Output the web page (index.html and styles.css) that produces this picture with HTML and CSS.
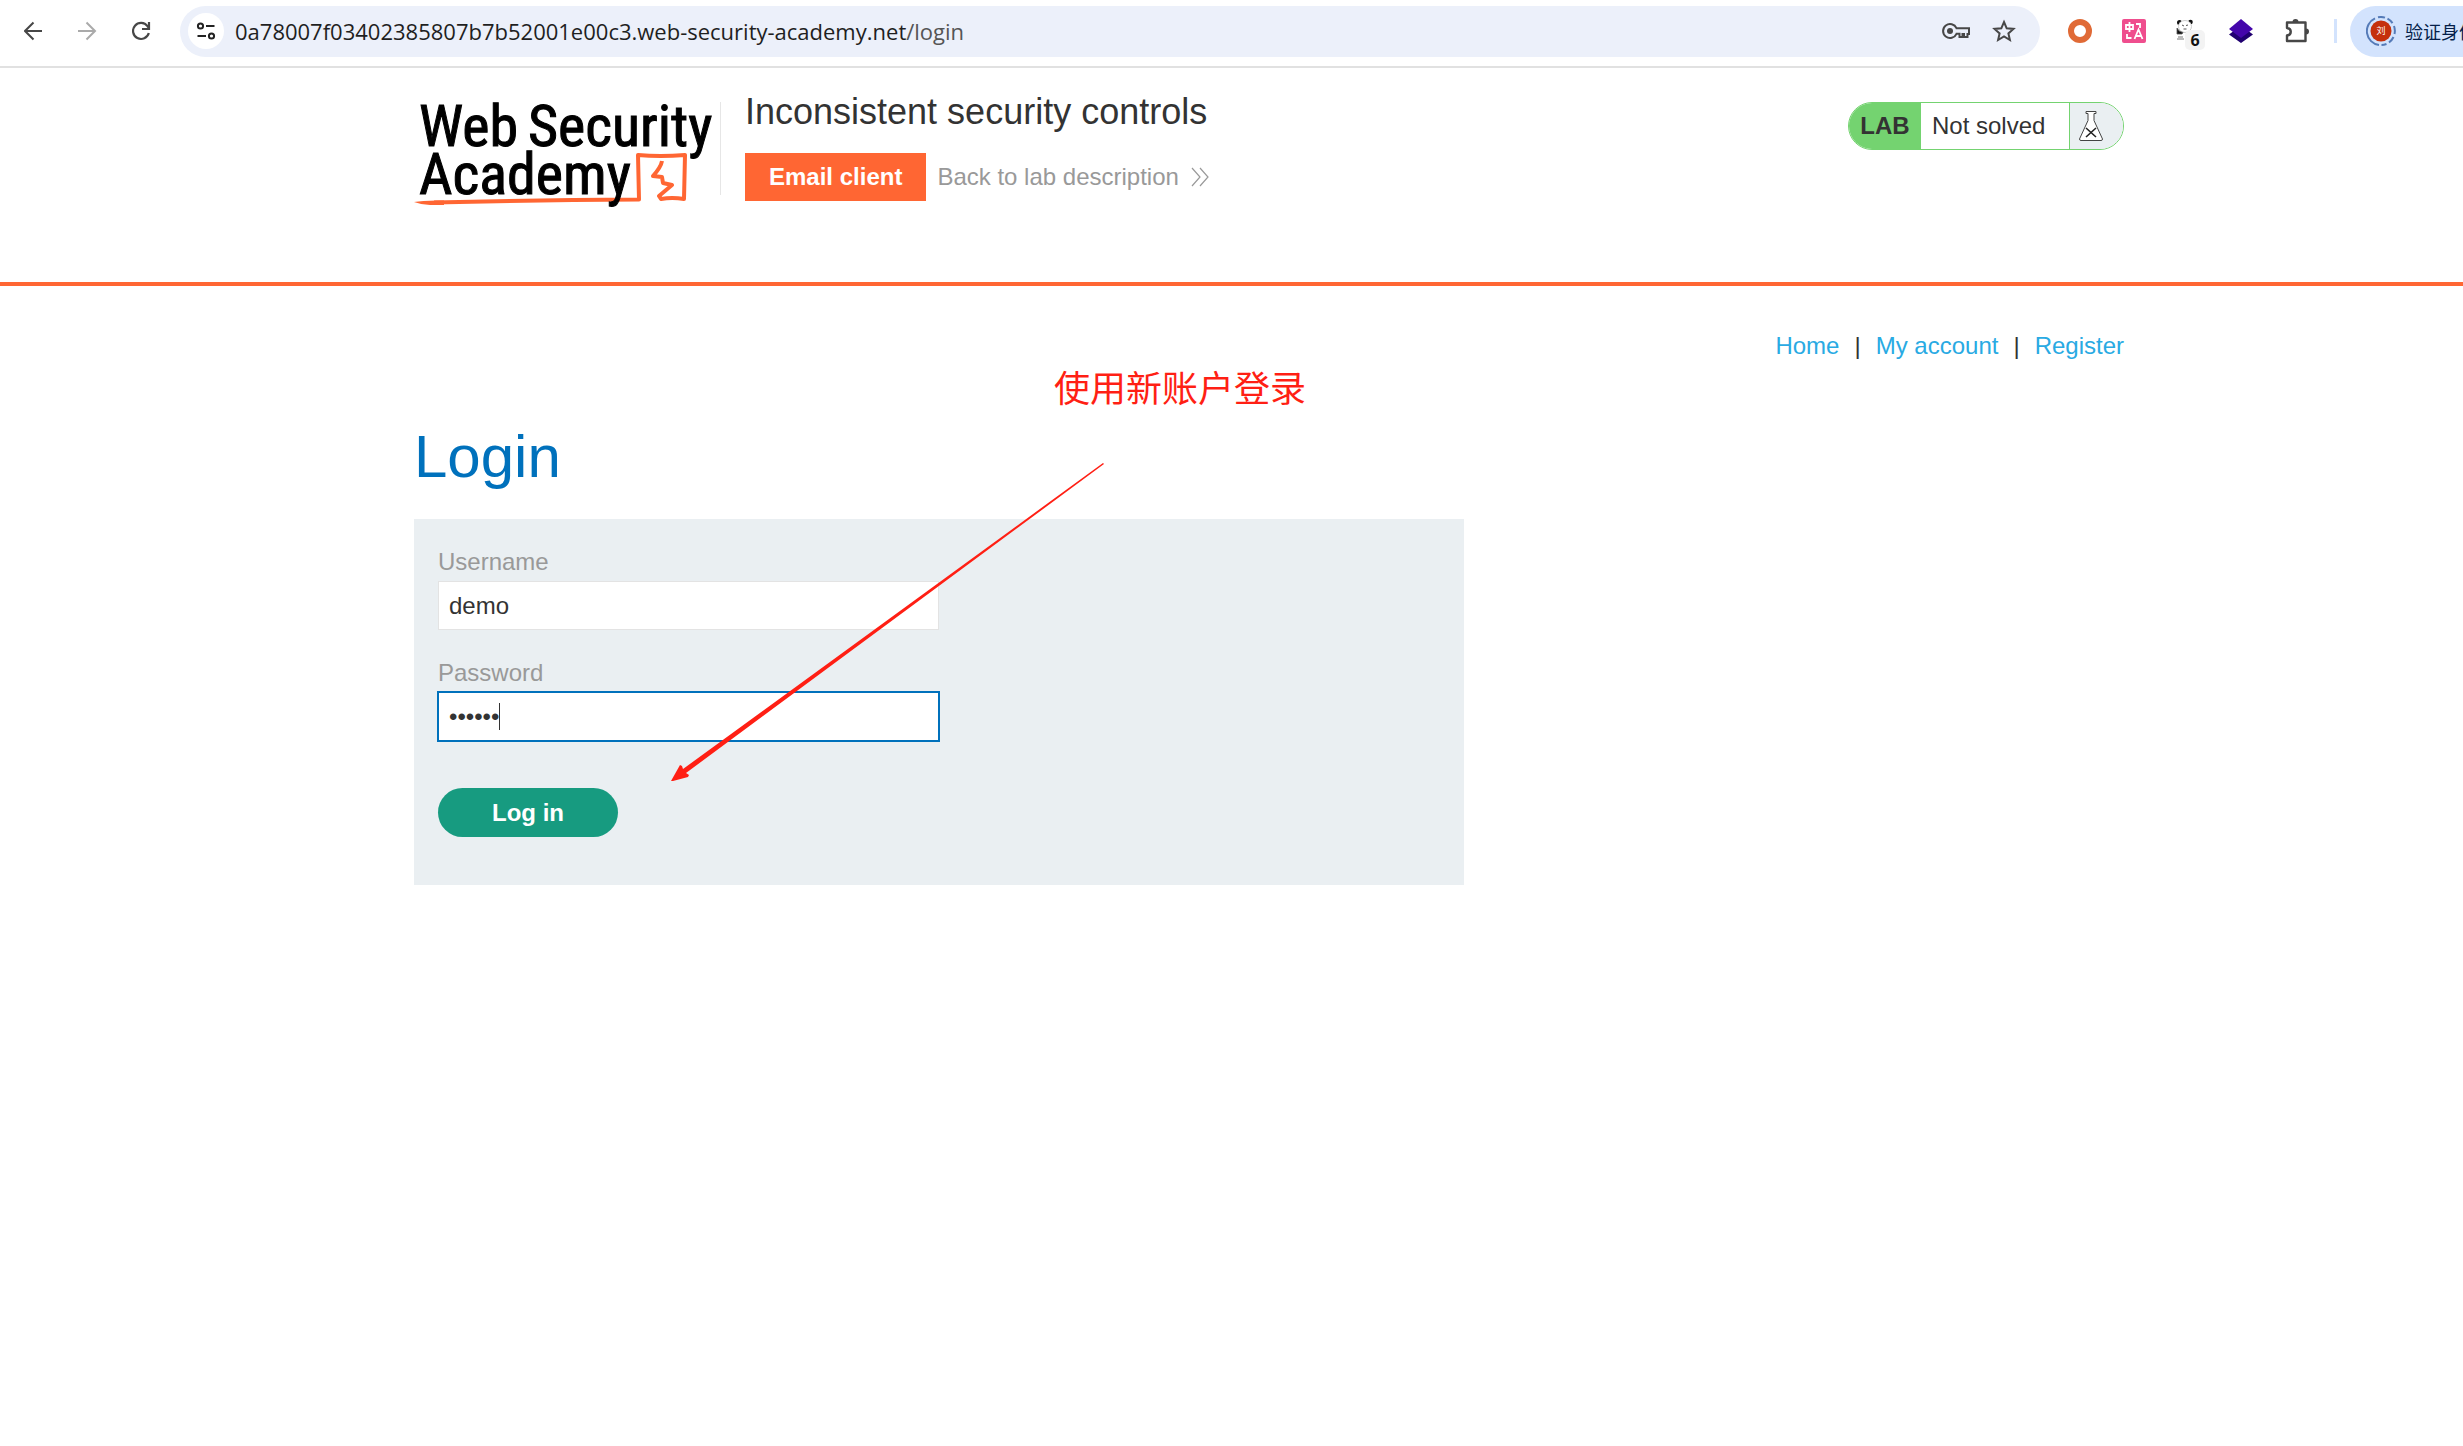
FILE: index.html
```html
<!DOCTYPE html>
<html lang="en">
<head>
<meta charset="utf-8">
<title>Inconsistent security controls</title>
<link rel="stylesheet" href="styles.css">
</head>
<body>
<div class="browser-bar">
  <button class="tool" type="button" aria-label="Back"><svg width="20" height="20" viewBox="0 0 20 20" fill="none" stroke="#474747" stroke-width="2"><path d="M18 10H2M9.500 1.500L1 10l8.500 8.500"/></svg></button>
  <button class="tool" type="button" aria-label="Forward"><svg width="20" height="20" viewBox="0 0 20 20" fill="none" stroke="#aaa" stroke-width="2"><path d="M0 10h16M8.500 1.500L17 10l-8.500 8.500"/></svg></button>
  <button class="tool" type="button" aria-label="Reload"><svg width="20" height="20" viewBox="0 0 20 20" fill="none" stroke="#474747" stroke-width="2.200"><path d="M16.800 12A8 8 0 1 1 15.500 5.200L17 7"/><path d="M17 1v7h-7"/></svg></button>
  <div class="address">
    <button class="site-info" type="button" aria-label="Site information"><svg width="20" height="18" viewBox="0 0 20 18" fill="none" stroke="#222" stroke-width="2"><circle cx="4.500" cy="4" r="2.600"/><path d="M10 4h8.500M1.500 14H10"/><circle cx="15.500" cy="14" r="2.600"/></svg></button>
    <span class="url">0a78007f03402385807b7b52001e00c3.web-security-academy.net<span class="url-path">/login</span></span>
    <button class="address-tool" type="button" aria-label="Passwords"><svg width="28" height="18" viewBox="0 0 28 18" fill="none" stroke="#474747" stroke-width="2"><path d="M14.500 6.200A7 7 0 1 0 14.500 11.800H17.500V15H20.500V12H22V15H25.500V12H27V6.200Z"/><circle cx="8" cy="9" r="3" fill="#474747" stroke="none"/></svg></button>
    <button class="address-tool" type="button" aria-label="Bookmark"><svg width="24" height="24" viewBox="0 0 24 24" fill="none" stroke="#474747" stroke-width="2"><path d="M12 3l2.700 6.300 6.800.600-5.100 4.500 1.500 6.600-5.900-3.500-5.900 3.500 1.500-6.600L2.500 9.900l6.800-.600z"/></svg></button>
  </div>
  <div class="extensions">
    <svg width="24" height="24" viewBox="0 0 24 24"><circle cx="12" cy="12" r="9" fill="#fff" stroke="#e06a36" stroke-width="6"/></svg>
    <svg width="24" height="24" viewBox="0 0 24 24" fill="none" stroke="#fff" stroke-width="1.800"><rect width="24" height="24" rx="2" fill="#ef4e8e" stroke="none"/><path d="M4 6h7v4H4zM7.500 3v10M14 5h4v4M5 15v4h4.500M12.500 20l4-9.500 4 9.500M14 17h5"/></svg>
    <span class="ext-panda">
      <svg width="20" height="24" viewBox="0 0 20 24"><circle cx="3.500" cy="3.500" r="2.500" fill="#111"/><circle cx="14.500" cy="3" r="2.300" fill="#111"/><ellipse cx="9" cy="7.500" rx="6.500" ry="6" fill="#fff" stroke="#ccc"/><path d="M6 6l2 1M10 6.500l2-.500M7.500 10h3" stroke="#555"/><path d="M1 9q2 4 6 4.500l-1 1.500H1zM2 18h5M1 20h7" fill="#111" stroke="#555" stroke-width=".8"/></svg>
      <span class="ext-count">6</span>
    </span>
    <svg width="26" height="26" viewBox="0 0 26 26"><path d="M1 16.500l4-3 8 4 8-4 4 3L13 25z" fill="#200070"/><path d="M13 1l12 10-12 9L1 11z" fill="#4406ab"/></svg>
    <svg width="26" height="26" viewBox="0 0 26 26" fill="none" stroke="#474747" stroke-width="2.400"><path d="M3 4.500h18.500V23H3v-5.500c5-.500 5-7 0-7.500z" stroke-linejoin="round"/><path d="M8.500 4a3 3 0 0 1 6 0zM22 10.500a3 3 0 0 1 0 6z" fill="#474747" stroke="none"/></svg>
  </div>
  <span class="bar-divider"></span>
  <button class="profile" type="button">
    <svg width="30" height="30" viewBox="0 0 30 30"><path d="M13 29A14 14 0 0 1 9 2.400M12 1.300a14 14 0 0 1 7 .300M21.500 2.600a14 14 0 0 1 5 4.500M28 10a14 14 0 0 1 .500 8M27.500 21a14 14 0 0 1-4.500 5.500M20.500 28a14 14 0 0 1-5 1" fill="none" stroke="#557bb8" stroke-width="2"/><circle cx="15" cy="15" r="10.500" fill="#c5300c"/><text class="avatar-text" x="15" y="18" text-anchor="middle">刘</text></svg>
    <span>验证身份</span>
  </button>
</div>

<header class="lab-header">
  <div class="wrap header-row">
    <a class="logo" href="#" aria-label="Web Security Academy">
      <svg width="306" height="106" viewBox="0 0 306 106">
        <path d="M20 100.500Q120 98 225 97.500L224 53Q246 55 271 53L270 97Q258 95 247 97L245 94L258 83L249 81L248 75L239 74Q247 65 248 59" fill="none" stroke="#ff6633" stroke-width="4" stroke-linejoin="round"/>
        <path d="M0 100Q10 98 30 98.500V103H16Q8 103 0 100z" fill="#ff6633"/>
        <g class="logo-text"><text x="5" y="44">Web</text><text x="114" y="44">Security</text><text x="5" y="92">Academy</text></g>
      </svg>
    </a>
    <div class="title-block">
      <h2 class="lab-title">Inconsistent security controls</h2>
      <div class="lab-links">
        <a class="email-button" href="#">Email client</a>
        <a class="back-link" href="#">Back to lab description <svg width="18" height="20" viewBox="0 0 18 20" fill="none" stroke="#999" stroke-width="1.200"><path d="M1 1l8 9-8 9M9 1l8 9-8 9"/></svg></a>
      </div>
    </div>
    <div class="lab-status">
      <span class="status-tag">LAB</span>
      <span class="status-text">Not solved</span>
      <span class="status-icon"><svg width="24" height="30" viewBox="0 0 24 30" fill="#fff" stroke="#444"><path d="M7 .500h10v2h-2v7L23.500 28q0 1.500-1.500 1.500H2Q.500 29.500.500 28L9 9.500v-7H7z"/><path d="M7 17l10 9M17 17l-10 9" stroke="#222" stroke-width="1.600"/></svg></span>
    </div>
  </div>
</header>

<main class="wrap">
  <nav class="top-links">
    <a href="#">Home</a><span>|</span><a href="#">My account</a><span>|</span><a href="#">Register</a>
  </nav>
  <h1 class="page-title">Login</h1>
  <form class="login-form">
    <label for="username">Username</label>
    <input id="username" type="text" value="demo">
    <label for="password">Password</label>
    <div class="password-field">
      <input class="focused" id="password" type="password" value="secret">
      <span class="caret"></span>
    </div>
    <button class="login-button" type="submit">Log in</button>
  </form>
</main>

<p class="note">使用新账户登录</p>
<svg class="note-arrow" width="434" height="320" viewBox="0 0 434 320"><path d="M0 318L9 302L11 303L12 306L432 0L433 1L15 310L18 312L17 314L2 318Z" fill="#ff1f14"/></svg>
</body>
</html>
```
FILE: styles.css
```css
* { box-sizing: border-box; }

body {
  position: relative;
  margin: 0;
  overflow-x: hidden;
  background: #fff;
  color: #333;
  font: 24px/28px "Liberation Sans", Arial, sans-serif;
}

a { text-decoration: none; }
svg { display: block; flex: none; }
button { margin: 0; padding: 0; border: 0; background: none; font: inherit; }

/* Browser toolbar */
.browser-bar {
  display: flex;
  align-items: center;
  height: 68px;
  padding: 0 0 4px 24px;
  border-bottom: 2px solid #e1e1e1;
  overflow: hidden;
}
.tool { flex: none; width: 20px; margin-right: 34px; }
.address {
  display: flex;
  flex: 1;
  align-items: center;
  min-width: 0;
  height: 51px;
  padding: 0 24px 0 8px;
  margin-left: -6px;
  border-radius: 26px;
  background: #ecf0fa;
}
.site-info {
  display: grid;
  flex: none;
  place-items: center;
  width: 36px;
  height: 36px;
  border-radius: 50%;
  background: #fff;
}
.url {
  flex: 1;
  margin-left: 11px;
  color: #1f1f1f;
  font: 22px/28px "Open Sans", "Noto Sans", sans-serif;
  white-space: nowrap;
}
.url-path { color: #555; }
.address-tool { flex: none; margin-left: 22px; }
.extensions { display: flex; flex: none; align-items: center; gap: 30px; margin-left: 28px; }
.ext-panda { position: relative; width: 22px; }
.ext-count {
  position: absolute;
  top: 11px;
  left: 9px;
  width: 20px;
  border-radius: 5px;
  background: #f3f3f3;
  color: #111;
  font: bold 16px/20px "Open Sans", sans-serif;
  text-align: center;
}
.bar-divider { flex: none; width: 3px; height: 24px; margin: 0 13px 0 24px; background: #d3e3fd; }
.profile {
  display: flex;
  flex: none;
  align-items: center;
  gap: 9px;
  width: 130px;
  height: 51px;
  margin-right: -17px;
  padding-left: 16px;
  border-radius: 26px 0 0 26px;
  background: #d3e3fd;
  color: #041e49;
  font: 18px/24px "Noto Sans CJK SC", sans-serif;
  white-space: nowrap;
}
.avatar-text { fill: #fff; font: 9px "Noto Sans CJK SC", sans-serif; }

/* Lab header */
.wrap { padding: 0 339px 0 414px; }
.lab-header { border-bottom: 4px solid #ff6633; }
.header-row { display: flex; align-items: flex-start; padding-top: 22px; padding-bottom: 81px; }
.logo { flex: none; width: 307px; margin-top: 12px; border-right: 1px solid #e6e6e6; height: 93px; }
.logo svg { overflow: visible; }
.logo-text {
  fill: #000;
  stroke: #000;
  stroke-width: 1;
  font: 58px "Roboto Condensed", "Liberation Sans Narrow", sans-serif;
}
.title-block { flex: 1; padding-left: 24px; }
.lab-title { margin: 0 0 19px; font-size: 36px; font-weight: 400; line-height: 44px; }
.lab-links { display: flex; align-items: center; gap: 11px; }
.email-button { padding: 10px 24px; background: #ff6633; color: #fff; font-weight: 700; }
.back-link { display: flex; align-items: center; gap: 12px; color: #999; }
.lab-status {
  display: flex;
  height: 48px;
  margin-top: 12px;
  overflow: hidden;
  border: 1px solid #74d370;
  border-radius: 24px;
  line-height: 46px;
}
.status-tag { width: 72px; background: #74d370; font-weight: 700; text-align: center; }
.status-text { width: 148px; padding-left: 11px; }
.status-icon { width: 54px; padding: 8px 9px; border-left: 1px solid #74d370; background: #eaeff2; }

/* Login page */
.top-links { display: flex; justify-content: flex-end; gap: 15px; padding-top: 46px; }
.top-links a { color: #29aae3; }
.page-title { margin: 62px 0 28px; color: #0071bc; font-size: 60px; font-weight: 400; line-height: 69px; }
.login-form {
  width: 1050px;
  max-width: 100%;
  padding: 29px 24px 48px;
  background: #eaeff2;
}
.login-form label { display: block; margin-bottom: 5px; color: #999; }
.login-form input {
  display: block;
  width: 501px;
  height: 49px;
  margin-bottom: 29px;
  padding: 0 10px;
  border: 1px solid #e3e3e3;
  background: #fff;
  color: #333;
  font: inherit;
}
.login-form .focused { border-color: #0071bc; box-shadow: 0 0 0 1px #0071bc; }
.password-field { position: relative; }
.caret { position: absolute; top: 11px; left: 61px; width: 1px; height: 27px; background: #333; }
.login-button {
  width: 180px;
  height: 49px;
  margin-top: 18px;
  border-radius: 25px;
  background: #179b80;
  color: #fff;
  font-weight: 700;
}

/* Annotation over the page */
.note {
  position: absolute;
  top: 360px;
  left: 1054px;
  margin: 0;
  color: #ff1f14;
  font: 36px/52px "Noto Sans CJK SC", sans-serif;
}
.note-arrow { position: absolute; top: 463px; left: 671px; }
```
